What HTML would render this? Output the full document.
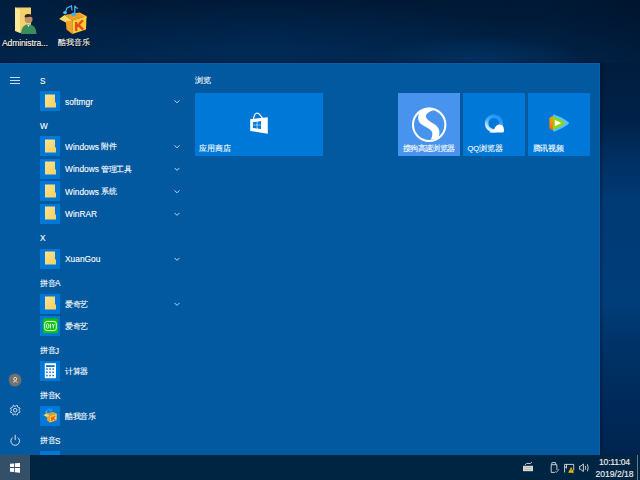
<!DOCTYPE html>
<html><head><meta charset="utf-8">
<style>
*{margin:0;padding:0;box-sizing:border-box}
html,body{width:640px;height:480px;overflow:hidden}
body{position:relative;font-family:"Liberation Sans",sans-serif;color:#fff;-webkit-text-stroke:0.2px rgba(255,255,255,.6);
background:linear-gradient(180deg,#001634 0%,#00264e 13%,#00234a 21%,#003264 43%,#003c78 64%,#00284e 85%,#001e40 100%);}
.a{position:absolute}
#wall{left:0;top:0;width:640px;height:63px;background:
radial-gradient(ellipse 110px 28px at 480px 63px,rgba(0,72,135,.4),rgba(0,72,135,0)),
radial-gradient(ellipse 260px 60px at 260px 50px,rgba(0,55,110,.35),rgba(0,55,110,0)),
radial-gradient(ellipse 120px 50px at 20px 10px,rgba(0,45,90,.3),rgba(0,45,90,0)),
linear-gradient(90deg,rgba(0,0,0,0) 0,rgba(0,0,0,0) 540px,rgba(0,10,25,.25) 640px),
linear-gradient(180deg,rgb(0,24,52) 0,rgb(0,27,57) 18px,rgb(0,33,68) 45px,rgb(0,37,76) 63px)}
#rwall{left:600px;top:63px;width:40px;height:392px;background:linear-gradient(180deg,rgb(0,28,60) 0,rgb(0,34,72) 57px,rgb(0,48,98) 97px,rgb(0,58,116) 137px,rgb(0,62,122) 240px,rgb(0,52,105) 277px,rgb(0,42,90) 337px,rgb(0,36,78) 392px)}
#start{left:0;top:63px;width:600px;height:392px;background:rgb(2,89,160);box-shadow:0 0 3px 1px rgba(0,10,30,.55);border-top:1px solid rgb(8,96,170);border-right:1px solid rgb(8,96,170)}
.hdr{position:absolute;left:40px;font-size:8.2px;line-height:10px;white-space:nowrap}
.cj{font-size:8px;letter-spacing:-0.45px;position:relative;top:-0.4px}
.it{position:absolute;left:40px;width:20px;height:20px;background:rgb(0,120,215)}
.lbl{position:absolute;left:65px;font-size:8.4px;letter-spacing:0;line-height:10px;white-space:nowrap}
.chev{position:absolute;left:173.5px;width:6px;height:7px}
.tile{position:absolute;top:93px;height:62.5px;background:rgb(0,120,215)}
.tl{position:absolute;left:5px;top:51px;font-size:7.5px;line-height:10px;white-space:nowrap}
#taskbar{left:0;top:455px;width:640px;height:25px;background:rgb(0,37,66)}
.dl{position:absolute;font-size:7.5px;line-height:10px;white-space:nowrap;text-shadow:0 0 1px #000,0 1px 1px #000}
</style></head><body>
<div class="a" id="wall"></div>
<div class="a" id="rwall"></div>

<!-- desktop icons -->
<svg class="a" style="left:12px;top:5px" width="26" height="30" viewBox="0 0 26 30">
  <path d="M3 2.5 H19 V25 L8 28 V7 L3 4Z" fill="#f3d26b"/>
  <path d="M3 2.5 L8 5 V28 L3 26Z" fill="#ffe89a"/>
  <circle cx="16.6" cy="14.2" r="3.9" fill="#c09070"/>
  <path d="M12.5 12 Q13 8.5 16.6 9 Q20.5 9 20.5 12.5 Q18 10.8 14 12.5Z" fill="#2b2520"/>
  <path d="M9 29 Q9 20 16.5 19 Q24.5 20 24.5 29Z" fill="#3a8c5c"/>
  <path d="M15 19.5 L16.6 22 L18 19.5Z" fill="#e8e8e8"/>
</svg>
<div class="dl" style="left:2px;top:37.8px;font-size:8.6px;letter-spacing:-0.15px">Administra...</div>

<svg class="a" style="left:56px;top:2px" width="34" height="34" viewBox="0 0 34 34">
  <path d="M9.5 10 L10.8 6.2 L15.5 3.8 L16 8.5" stroke="#4ab8f5" stroke-width="1.1" fill="none"/>
  <path d="M18.8 12 V3.8 Q19.5 6 22 6.5" stroke="#4ab8f5" stroke-width="1.2" fill="none"/>
  <ellipse cx="9" cy="10.6" rx="1.9" ry="1.6" fill="#52bff8"/>
  <path d="M8.5 13 L23.4 10.6 L30.5 14 L16.3 18.5Z" fill="#f0a020"/>
  <path d="M3.2 17 L8.5 13 L16.3 18.5 L11.7 21.5Z" fill="#ffd860"/>
  <path d="M23.4 10.6 L31.2 15.2 L30.5 16 L24 12Z" fill="#ffb840"/>
  <path d="M9.8 19.5 L16.3 18.5 L16.3 32 L10.5 27.5Z" fill="#f5a028"/>
  <path d="M16.3 18.5 L30.5 14 L30 27.5 L16.3 32Z" fill="#ffcc3a"/>
  <ellipse cx="17.6" cy="12.6" rx="2.3" ry="2" fill="#3aaef0"/>
  <path d="M20.2 20 V29 M20.8 24.8 L26.8 18.2 M22.5 23.2 L27.2 27.6" stroke="#e84c18" stroke-width="2.4" fill="none"/>
</svg>
<div class="dl" style="left:57.5px;top:38.2px;font-size:7.9px">酷我音乐</div>

<div class="a" id="start"></div>

<!-- left rail -->
<div class="a" style="left:10px;top:77.4px;width:10px;height:1.1px;background:#c8dcf2"></div>
<div class="a" style="left:10px;top:80px;width:10px;height:1.1px;background:#c8dcf2"></div>
<div class="a" style="left:10px;top:82.6px;width:10px;height:1.1px;background:#c8dcf2"></div>

<div class="a" style="left:9.3px;top:374.3px;width:11.8px;height:11.8px;border-radius:50%;background:#74716d;box-shadow:0 0 0 0.5px rgba(150,120,90,.6)"></div>
<svg class="a" style="left:9px;top:374px" width="13" height="13" viewBox="0 0 13 13"><circle cx="6.2" cy="4.9" r="1.5" stroke="#e6e6e6" stroke-width="0.9" fill="none"/><path d="M3.9 8.6 Q6.2 5.6 8.5 8.6" stroke="#e6e6e6" stroke-width="0.9" fill="none"/></svg>

<svg class="a" style="left:9px;top:404px" width="13" height="13" viewBox="0 0 13 13">
  <circle cx="6.2" cy="6.2" r="1.8" stroke="#e8f0fa" stroke-width="0.9" fill="none"/>
  <path d="M6.84 2.15 L7.63 1.41 L8.57 1.80 L8.61 2.88 L9.52 3.79 L10.60 3.83 L10.99 4.77 L10.25 5.56 L10.25 6.84 L10.99 7.63 L10.60 8.57 L9.52 8.61 L8.61 9.52 L8.57 10.60 L7.63 10.99 L6.84 10.25 L5.56 10.25 L4.77 10.99 L3.83 10.60 L3.79 9.52 L2.88 8.61 L1.80 8.57 L1.41 7.63 L2.15 6.84 L2.15 5.56 L1.41 4.77 L1.80 3.83 L2.88 3.79 L3.79 2.88 L3.83 1.80 L4.77 1.41 L5.56 2.15Z" stroke="#e8f0fa" stroke-width="0.9" fill="none" stroke-linejoin="round"/>
</svg>

<svg class="a" style="left:9px;top:434px" width="13" height="13" viewBox="0 0 13 13">
  <path d="M3.73 3.48 A4.3 4.3 0 1 0 8.67 3.48" stroke="#e8f0fa" stroke-width="0.9" fill="none"/>
  <path d="M6.2 0.9 V6.1" stroke="#e8f0fa" stroke-width="0.9"/>
</svg>

<div class="hdr" style="top:76.55px">S</div>
<div class="it" style="top:91.00px"><svg class="a" style="left:5px;top:2.5px" width="12" height="14" viewBox="0 0 12 14"><defs><linearGradient id="fg1" x1="0" y1="0" x2="1" y2="1"><stop offset="0" stop-color="#ffe28f"/><stop offset="1" stop-color="#f8d060"/></linearGradient></defs><path d="M0 0.5H10V8.5H11V13.5H0Z" fill="url(#fg1)"/></svg></div>
<div class="lbl" style="top:96.75px">softmgr</div>
<svg class="chev" style="top:97px" width="6" height="7" viewBox="0 0 6 7"><path d="M0.5 3.35 L3 5.85 L5.5 3.35" stroke="rgba(220,235,255,.85)" stroke-width="1" fill="none"/></svg>
<div class="hdr" style="top:121.55px">W</div>
<div class="it" style="top:136.00px"><svg class="a" style="left:5px;top:2.5px" width="12" height="14" viewBox="0 0 12 14"><defs><linearGradient id="fg3" x1="0" y1="0" x2="1" y2="1"><stop offset="0" stop-color="#ffe28f"/><stop offset="1" stop-color="#f8d060"/></linearGradient></defs><path d="M0 0.5H10V8.5H11V13.5H0Z" fill="url(#fg3)"/></svg></div>
<div class="lbl" style="top:141.75px">Windows<span class="cj" style="margin-left:2px">附件</span></div>
<svg class="chev" style="top:142px" width="6" height="7" viewBox="0 0 6 7"><path d="M0.5 3.35 L3 5.85 L5.5 3.35" stroke="rgba(220,235,255,.85)" stroke-width="1" fill="none"/></svg>
<div class="it" style="top:158.50px"><svg class="a" style="left:5px;top:2.5px" width="12" height="14" viewBox="0 0 12 14"><defs><linearGradient id="fg4" x1="0" y1="0" x2="1" y2="1"><stop offset="0" stop-color="#ffe28f"/><stop offset="1" stop-color="#f8d060"/></linearGradient></defs><path d="M0 0.5H10V8.5H11V13.5H0Z" fill="url(#fg4)"/></svg></div>
<div class="lbl" style="top:164.25px">Windows<span class="cj" style="margin-left:2px">管理工具</span></div>
<svg class="chev" style="top:165px" width="6" height="7" viewBox="0 0 6 7"><path d="M0.5 2.85 L3 5.35 L5.5 2.85" stroke="rgba(220,235,255,.85)" stroke-width="1" fill="none"/></svg>
<div class="it" style="top:181.00px"><svg class="a" style="left:5px;top:2.5px" width="12" height="14" viewBox="0 0 12 14"><defs><linearGradient id="fg5" x1="0" y1="0" x2="1" y2="1"><stop offset="0" stop-color="#ffe28f"/><stop offset="1" stop-color="#f8d060"/></linearGradient></defs><path d="M0 0.5H10V8.5H11V13.5H0Z" fill="url(#fg5)"/></svg></div>
<div class="lbl" style="top:186.75px">Windows<span class="cj" style="margin-left:2px">系统</span></div>
<svg class="chev" style="top:187px" width="6" height="7" viewBox="0 0 6 7"><path d="M0.5 3.35 L3 5.85 L5.5 3.35" stroke="rgba(220,235,255,.85)" stroke-width="1" fill="none"/></svg>
<div class="it" style="top:203.50px"><svg class="a" style="left:5px;top:2.5px" width="12" height="14" viewBox="0 0 12 14"><defs><linearGradient id="fg6" x1="0" y1="0" x2="1" y2="1"><stop offset="0" stop-color="#ffe28f"/><stop offset="1" stop-color="#f8d060"/></linearGradient></defs><path d="M0 0.5H10V8.5H11V13.5H0Z" fill="url(#fg6)"/></svg></div>
<div class="lbl" style="top:209.25px">WinRAR</div>
<svg class="chev" style="top:210px" width="6" height="7" viewBox="0 0 6 7"><path d="M0.5 2.85 L3 5.35 L5.5 2.85" stroke="rgba(220,235,255,.85)" stroke-width="1" fill="none"/></svg>
<div class="hdr" style="top:234.05px">X</div>
<div class="it" style="top:248.50px"><svg class="a" style="left:5px;top:2.5px" width="12" height="14" viewBox="0 0 12 14"><defs><linearGradient id="fg8" x1="0" y1="0" x2="1" y2="1"><stop offset="0" stop-color="#ffe28f"/><stop offset="1" stop-color="#f8d060"/></linearGradient></defs><path d="M0 0.5H10V8.5H11V13.5H0Z" fill="url(#fg8)"/></svg></div>
<div class="lbl" style="top:254.25px">XuanGou</div>
<svg class="chev" style="top:255px" width="6" height="7" viewBox="0 0 6 7"><path d="M0.5 2.85 L3 5.35 L5.5 2.85" stroke="rgba(220,235,255,.85)" stroke-width="1" fill="none"/></svg>
<div class="hdr" style="top:279.05px"><span class="cj">拼音</span>A</div>
<div class="it" style="top:293.50px"><svg class="a" style="left:5px;top:2.5px" width="12" height="14" viewBox="0 0 12 14"><defs><linearGradient id="fg10" x1="0" y1="0" x2="1" y2="1"><stop offset="0" stop-color="#ffe28f"/><stop offset="1" stop-color="#f8d060"/></linearGradient></defs><path d="M0 0.5H10V8.5H11V13.5H0Z" fill="url(#fg10)"/></svg></div>
<div class="lbl" style="top:299.25px"><span class="cj">爱奇艺</span></div>
<svg class="chev" style="top:300px" width="6" height="7" viewBox="0 0 6 7"><path d="M0.5 2.85 L3 5.35 L5.5 2.85" stroke="rgba(220,235,255,.85)" stroke-width="1" fill="none"/></svg>
<div class="it" style="top:316.00px"><svg class="a" style="left:0;top:0" width="20" height="20" viewBox="0 0 20 20"><rect x="3" y="2.2" width="15" height="15" rx="1.5" fill="#10c010"/><rect x="4.7" y="5.4" width="11.6" height="9.2" rx="2.4" stroke="#eaffea" stroke-width="1" fill="none"/><ellipse cx="7.7" cy="10" rx="1.2" ry="2.4" stroke="#eaffea" stroke-width="0.9" fill="none"/><rect x="9.9" y="7.7" width="1" height="4.7" fill="#eaffea"/><path d="M12.1 7.8 L13.3 10 L14.5 7.8 M13.3 10 V12.4" stroke="#eaffea" stroke-width="0.9" fill="none"/></svg></div>
<div class="lbl" style="top:321.75px"><span class="cj">爱奇艺</span></div>
<div class="hdr" style="top:346.55px"><span class="cj">拼音</span>J</div>
<div class="it" style="top:361.00px"><svg class="a" style="left:0;top:0" width="20" height="20" viewBox="0 0 20 20"><rect x="4.8" y="2.2" width="11.2" height="15" fill="#fff"/><rect x="6" y="4.2" width="8.6" height="1.8" fill="rgb(0,110,210)"/><rect x="6.20" y="7.30" width="1.5" height="1.5" fill="rgb(0,110,210)"/><rect x="9.30" y="7.30" width="1.5" height="1.5" fill="rgb(0,110,210)"/><rect x="12.40" y="7.30" width="1.5" height="1.5" fill="rgb(0,110,210)"/><rect x="6.20" y="10.55" width="1.5" height="1.5" fill="rgb(0,110,210)"/><rect x="9.30" y="10.55" width="1.5" height="1.5" fill="rgb(0,110,210)"/><rect x="12.40" y="10.55" width="1.5" height="1.5" fill="rgb(0,110,210)"/><rect x="6.20" y="13.80" width="1.5" height="1.5" fill="rgb(0,110,210)"/><rect x="9.30" y="13.80" width="1.5" height="1.5" fill="rgb(0,110,210)"/><rect x="12.40" y="13.80" width="1.5" height="1.5" fill="rgb(0,110,210)"/></svg></div>
<div class="lbl" style="top:366.75px"><span class="cj">计算器</span></div>
<div class="hdr" style="top:391.55px"><span class="cj">拼音</span>K</div>
<div class="it" style="top:406.00px"><svg class="a" style="left:1.9px;top:1.35px" width="16.5" height="16.5" viewBox="0 0 34 34">  <path d="M9.5 10 L10.8 6.2 L15.5 3.8 L16 8.5" stroke="#4ab8f5" stroke-width="1.1" fill="none"/>  <path d="M18.8 12 V3.8 Q19.5 6 22 6.5" stroke="#4ab8f5" stroke-width="1.2" fill="none"/>  <ellipse cx="9" cy="10.6" rx="1.9" ry="1.6" fill="#52bff8"/>  <path d="M8.5 13 L23.4 10.6 L30.5 14 L16.3 18.5Z" fill="#f0a020"/>  <path d="M3.2 17 L8.5 13 L16.3 18.5 L11.7 21.5Z" fill="#ffd860"/>  <path d="M23.4 10.6 L31.2 15.2 L30.5 16 L24 12Z" fill="#ffb840"/>  <path d="M9.8 19.5 L16.3 18.5 L16.3 32 L10.5 27.5Z" fill="#f5a028"/>  <path d="M16.3 18.5 L30.5 14 L30 27.5 L16.3 32Z" fill="#ffcc3a"/>  <ellipse cx="17.6" cy="12.6" rx="2.3" ry="2" fill="#3aaef0"/>  <path d="M20.2 20 V29 M20.8 24.8 L26.8 18.2 M22.5 23.2 L27.2 27.6" stroke="#e84c18" stroke-width="2.4" fill="none"/></svg></div>
<div class="lbl" style="top:411.75px"><span class="cj">酷我音乐</span></div>
<div class="hdr" style="top:436.55px"><span class="cj">拼音</span>S</div>
<div class="it" style="top:451.00px"></div>

<!-- tiles -->
<div class="a" style="left:195px;top:76.3px;font-size:7.6px;line-height:10px">浏览</div>

<div class="tile" style="left:195px;width:128px">
  <svg class="a" style="left:49px;top:15px" width="30" height="30" viewBox="0 0 30 30">
    <path d="M9.4 10.8 Q10.5 5.2 12.8 5.1 Q15.2 4.9 18.4 10.1" stroke="#fff" stroke-width="1.1" fill="none"/>
    <path d="M6.2 11.2 L23.8 9.3 L23.8 25.8 L6.2 22.9 Z" fill="#fff"/>
    <path d="M8.9 14.2 L12.75 13.8 V16.8 H8.9Z M13.35 13.7 L17 13.1 V16.8 H13.35Z M8.9 17.35 H12.75 V20.4 L8.9 19.9Z M13.35 17.35 H17 V21 L13.35 20.5Z" fill="rgb(0,120,215)"/>
  </svg>
  <div class="tl" style="left:4px">应用商店</div>
</div>

<div class="tile" style="left:397.5px;width:62.5px;background:rgb(72,147,237)">
  <svg class="a" style="left:11.5px;top:11px" width="40" height="40" viewBox="0 0 40 40">
    <circle cx="20.2" cy="20.8" r="16.2" stroke="#fff" stroke-width="2.1" fill="none"/>
    <path d="M11.5 7.5 C8.3 10.5, 8.3 17, 12 20 C15 22.5, 20 24, 22.5 27 C24 29.5, 23.5 32.5, 21.5 35.8 L28.8 34.5 C31.2 30.5, 31.2 25.5, 27.5 21.8 C24.5 18.8, 19 17.5, 17.2 13.5 C16 10.5, 19 7.5, 27 5.5 L20 3.5 Z" fill="#fff"/>
  </svg>
  <div class="tl" style="left:5.5px;letter-spacing:-0.7px">搜狗高速浏览器</div>
</div>

<div class="tile" style="left:462.5px;width:62.5px">
  <svg class="a" style="left:19.5px;top:18px" width="24" height="24" viewBox="0 0 24 24">
    <defs><linearGradient id="qg" x1="0.8" y1="0" x2="0.2" y2="1"><stop offset="0" stop-color="#1e90f0"/><stop offset="0.45" stop-color="#38a8ff"/><stop offset="1" stop-color="#f0faff"/></linearGradient></defs>
    <circle cx="11.9" cy="12.4" r="7.3" stroke="url(#qg)" stroke-width="3.6" fill="none"/>
    <path d="M7.5 21.5 Q9 18.6 12.3 18.6 Q13.5 13.6 17.8 13.6 Q21.6 14 21.9 18.2 Q22.6 20 21.2 21.5 Z" fill="#fff"/>
  </svg>
  <div class="tl">QQ浏览器</div>
</div>

<div class="tile" style="left:527.5px;width:62.5px">
  <svg class="a" style="left:16.5px;top:15px" width="30" height="30" viewBox="0 0 30 30">
    <path d="M8.8 7.6 Q9 6.3 10.6 6.7 Q19 9.6 24.4 14 Q25.6 15 24.4 16 Q19 20.5 10.6 23.4 Q9 23.9 8.8 22.5 Z" fill="#52c2ff"/>
    <path d="M8.2 8.6 Q16 10.2 21.4 15.1 Q16 20 8.2 21.7 Z" fill="#94d40a"/>
    <defs><linearGradient id="tvo" x1="0" y1="0" x2="0" y2="1"><stop offset="0" stop-color="#ffa800"/><stop offset="1" stop-color="#ff6400"/></linearGradient></defs><path d="M5.4 11 Q5.6 8.8 8.8 8.6 V22 Q5.6 21.8 5.4 19.5 Z" fill="url(#tvo)"/>
    <path d="M10.9 12.1 L17.3 15.1 L10.9 18.2 Z" fill="#fff"/>
  </svg>
  <div class="tl" style="letter-spacing:-0.3px">腾讯视频</div>
</div>

<!-- taskbar -->
<div class="a" id="taskbar">
  <div class="a" style="left:0;top:0;width:30px;height:25px;background:rgb(52,80,104)"></div>
  <svg class="a" style="left:10px;top:7px" width="10" height="11" viewBox="0 0 10 11">
    <path d="M0 1.8 L4.1 1.4 V5.1 H0Z M4.9 1.3 L10.2 0.9 V5.1 H4.9Z M0 5.9 H4.1 V10 L0 9.8Z M4.9 5.9 H10.2 V10.8 L4.9 10.3Z" fill="#fff"/>
  </svg>
  <svg class="a" style="left:522px;top:6px" width="12" height="11" viewBox="0 0 12 11">
    <path d="M3 4 Q4 1.5 7 2.5 Q9 3 10 1" stroke="#d8d8d0" stroke-width="0.9" fill="none"/>
    <rect x="1" y="4.8" width="10" height="5.4" fill="#d8d8d0"/>
    <path d="M2.5 6.5 H9.5 M2.5 8.5 H9.5" stroke="#a0a098" stroke-width="0.5"/>
  </svg>
  <svg class="a" style="left:548px;top:5px" width="30" height="16" viewBox="0 0 30 16">
    <path d="M3.8 4.6 V2.9 Q3.8 2.6 4.3 2.6 H7.2 Q7.7 2.6 7.7 3 V4.6" stroke="#dcdcdc" stroke-width="0.9" fill="none"/>
    <path d="M3.2 4.7 H8.9 V10 M3.2 4.7 V12.4 H6.8" stroke="#dcdcdc" stroke-width="0.9" fill="none"/>
    <path d="M7.2 11.6 L8.6 12.3 L11 9.2" stroke="#cfcfcf" stroke-width="0.8" fill="none"/>
    <path d="M16.6 4.4 H25.7 V10.5 M16.6 4.4 V12.4 M18.5 4.4 V8.5" stroke="#dcdcdc" stroke-width="0.9" fill="none"/>
    <path d="M16 7.2 H19" stroke="#dcdcdc" stroke-width="0.8"/>
    <path d="M20.2 12.7 L23.1 7 L26 12.7Z" fill="#f5c400"/>
    <path d="M23.1 9 V11 M23.1 11.6 V12.1" stroke="#3a3000" stroke-width="0.6"/>
  </svg>
  <svg class="a" style="left:578.5px;top:8px" width="12" height="10" viewBox="0 0 12 10">
    <path d="M0.6 3.2 H1.7 L4.4 1 V8.6 L1.7 6.4 H0.6Z" stroke="#e0e0e0" stroke-width="0.9" fill="none"/>
    <path d="M6.3 2.9 Q7.1 4.8 6.3 6.7 M8.4 1.3 Q10 4.8 8.4 8.3" stroke="#e0e0e0" stroke-width="0.9" fill="none"/>
  </svg>
  <div class="a" style="left:594px;width:41px;text-align:center;top:2.3px;font-size:8.6px;letter-spacing:-0.25px;line-height:10px;color:#f0f0f0">10:11:04</div>
  <div class="a" style="left:594px;width:41px;text-align:center;top:14.4px;font-size:8.6px;line-height:10px;color:#f0f0f0">2019/2/18</div>
  <div class="a" style="left:637px;top:0;width:1px;height:25px;background:#6a7a8a"></div>
</div>
</body></html>
